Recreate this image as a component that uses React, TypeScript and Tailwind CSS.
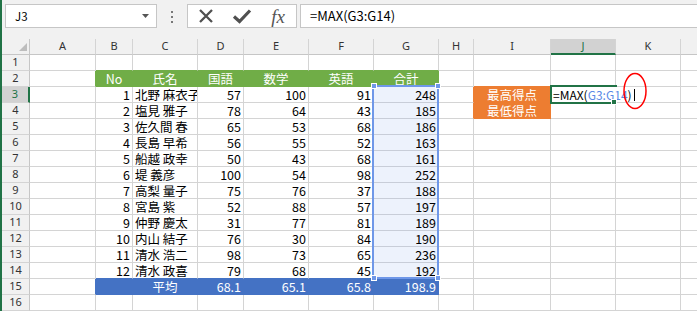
import React from 'react'

type Fill = 'green' | 'blue' | 'orange'

interface Cell {
  text?: string
  fill?: Fill
  align?: 'l' | 'c' | 'r'
  sel?: boolean
}

const FILLS: Record<Fill, { bg: string; r: string; b: string }> = {
  green: { bg: 'bg-[#70ad47]', r: 'border-r-[#70ad47]', b: 'border-b-[#70ad47]' },
  blue: { bg: 'bg-[#4472c4]', r: 'border-r-[#4472c4]', b: 'border-b-[#4472c4]' },
  orange: { bg: 'bg-[#ed7d31]', r: 'border-r-[#ed7d31]', b: 'border-b-[#ed7d31]' }
}

const COL_LETTERS = ['A', 'B', 'C', 'D', 'E', 'F', 'G', 'H', 'I', 'J', 'K', 'L']
const COL_WIDTHS = [
  'w-[66px]', 'w-[37px]', 'w-[65px]', 'w-[46px]', 'w-[65px]', 'w-[65px]',
  'w-[65px]', 'w-[35px]', 'w-[77px]', 'w-[65px]', 'w-[65px]', 'w-[65px]'
]

const scores: [number, string, number, number, number, number][] = [
  [1, '北野 麻衣子', 57, 100, 91, 248],
  [2, '塩見 雅子', 78, 64, 43, 185],
  [3, '佐久間 春', 65, 53, 68, 186],
  [4, '長島 早希', 56, 55, 52, 163],
  [5, '船越 政幸', 50, 43, 68, 161],
  [6, '堤 義彦', 100, 54, 98, 252],
  [7, '高梨 量子', 75, 76, 37, 188],
  [8, '宮島 紫', 52, 88, 57, 197],
  [9, '仲野 慶太', 31, 77, 81, 189],
  [10, '内山 結子', 76, 30, 84, 190],
  [11, '清水 浩二', 98, 73, 65, 236],
  [12, '清水 政喜', 79, 68, 45, 192]
]

function buildSheet(): Cell[][] {
  const rows: Cell[][] = Array.from({ length: 17 }, () =>
    Array.from({ length: 12 }, () => ({}))
  )

  // 見出し行
  const head = ['No', '氏名', '国語', '数学', '英語', '合計']
  head.forEach((t, i) => {
    rows[1][i + 1] = { text: t, fill: 'green', align: 'c' }
  })

  scores.forEach((s, i) => {
    const r = rows[i + 2]
    r[1] = { text: String(s[0]), align: 'r' }
    r[2] = { text: s[1], align: 'l' }
    r[3] = { text: String(s[2]), align: 'r' }
    r[4] = { text: String(s[3]), align: 'r' }
    r[5] = { text: String(s[4]), align: 'r' }
    r[6] = { text: String(s[5]), align: 'r', sel: true }
  })

  rows[2][8] = { text: '最高得点', fill: 'orange', align: 'c' }
  rows[3][8] = { text: '最低得点', fill: 'orange', align: 'c' }

  // 平均
  rows[14][1] = { fill: 'blue' }
  rows[14][2] = { text: '平均', fill: 'blue', align: 'c' }
  rows[14][3] = { text: '68.1', fill: 'blue', align: 'r' }
  rows[14][4] = { text: '65.1', fill: 'blue', align: 'r' }
  rows[14][5] = { text: '65.8', fill: 'blue', align: 'r' }
  rows[14][6] = { text: '198.9', fill: 'blue', align: 'r' }

  return rows
}

function FormulaBar() {
  return (
    <div className="flex h-[39px] items-start bg-[#f1f1f1] pt-1">
      <div className="ml-[3px] flex h-6 w-[152px] items-center border border-[#c6c6c6] bg-white">
        <span className="flex-1 pl-[9px] font-['Noto_Sans_CJK_JP',sans-serif] text-[11.5px] leading-[22px] text-black">
          J3
        </span>
        <svg width="7" height="4" viewBox="0 0 7 4" className="mr-[7px]">
          <polygon points="0,0 7,0 3.5,4" fill="#555" />
        </svg>
      </div>

      <div className="flex w-[30px] flex-col items-center gap-[3px] pt-[7px]">
        <span className="h-[2px] w-[2px] bg-[#777]" />
        <span className="h-[2px] w-[2px] bg-[#777]" />
        <span className="h-[2px] w-[2px] bg-[#777]" />
      </div>

      <div className="flex h-6 w-[110px] items-center border border-[#c6c6c6] bg-white">
        <div className="flex flex-1 justify-center">
          <svg width="16" height="16" viewBox="0 0 16 16">
            <path d="M2 2 L14 14 M14 2 L2 14" stroke="#505050" strokeWidth="2.3" />
          </svg>
        </div>
        <div className="flex flex-1 justify-center">
          <svg width="20" height="16" viewBox="0 0 20 16">
            <path d="M2 8.5 L7.5 13.5 L18 2.5" stroke="#505050" strokeWidth="3.2" fill="none" />
          </svg>
        </div>
        <div className="flex flex-1 justify-center">
          <span className="font-['Liberation_Serif',serif] text-[19px] italic leading-none text-[#555]">
            fx
          </span>
        </div>
      </div>

      <div className="ml-[3px] h-6 flex-1 border border-r-0 border-[#c6c6c6] bg-white pl-[9px] font-['Noto_Sans_CJK_JP',sans-serif] text-[13px] leading-[22px] text-black">
        =MAX(G3:G14)
      </div>
    </div>
  )
}

function ColumnHeader() {
  return (
    <div className="flex h-4 bg-[#f1f1f1] font-['Noto_Sans',sans-serif] text-[11px] text-[#333]">
      <div className="relative w-[28px] shrink-0 border-b border-r border-[#c6c6c6]">
        <svg width="8" height="8" viewBox="0 0 8 8" className="absolute bottom-[3px] right-[2px]">
          <polygon points="8,0 8,8 0,8" fill="#bdbdbd" />
        </svg>
      </div>
      {COL_LETTERS.map((l, i) => (
        <div
          key={l}
          className={`${COL_WIDTHS[i]} flex shrink-0 items-center justify-center border-r border-r-[#d4d4d4] ${
            i === 9
              ? 'border-b-2 border-b-[#217346] bg-[#d2d2d2] text-[#217346]'
              : 'border-b border-b-[#c6c6c6]'
          }`}
        >
          {l}
        </div>
      ))}
    </div>
  )
}

function SheetRow({ rows, ri }: { rows: Cell[][]; ri: number }) {
  const row = rows[ri]
  const below = rows[ri + 1]
  const active = ri === 2

  return (
    <div className="flex h-4">
      <div
        className={`flex w-[28px] shrink-0 items-center justify-center border-b border-b-[#d4d4d4] font-['Noto_Sans',sans-serif] text-[11px] ${
          active
            ? 'border-r-2 border-r-[#217346] bg-[#d2d2d2] text-[#217346]'
            : 'border-r border-r-[#c6c6c6] bg-[#f1f1f1] text-[#333]'
        }`}
      >
        {ri + 1}
      </div>
      {row.map((cell, ci) => {
        const right = row[ci + 1]
        const down = below?.[ci]
        const rb = cell.fill
          ? FILLS[cell.fill].r
          : right?.fill
            ? FILLS[right.fill].r
            : cell.sel
              ? 'border-r-[#c8cdd8]'
              : 'border-r-[#d4d4d4]'
        const bb = cell.fill
          ? FILLS[cell.fill].b
          : down?.fill
            ? FILLS[down.fill].b
            : cell.sel
              ? 'border-b-[#c8cdd8]'
              : 'border-b-[#d4d4d4]'
        const bg = cell.fill ? FILLS[cell.fill].bg : cell.sel ? 'bg-[#edf2fc]' : 'bg-white'
        const align =
          cell.align === 'r'
            ? 'text-right pr-[2px]'
            : cell.align === 'c'
              ? 'text-center'
              : 'text-left pl-[2px]'
        return (
          <div
            key={ci}
            className={`${COL_WIDTHS[ci]} shrink-0 overflow-hidden whitespace-nowrap border-b border-r ${rb} ${bb} ${bg} ${align} text-[12.5px] leading-[15px] ${
              cell.fill ? 'text-white' : 'text-black'
            }`}
          >
            {cell.text}
          </div>
        )
      })}
    </div>
  )
}

export default function App() {
  const rows = buildSheet()

  return (
    <div className="h-[311px] w-[697px] overflow-hidden border-l-2 border-[#217346] bg-white">
      <FormulaBar />

      <div className="relative font-['Noto_Sans_CJK_JP',sans-serif]">
        <ColumnHeader />
        {rows.map((_, ri) => (
          <SheetRow key={ri} rows={rows} ri={ri} />
        ))}

        {/* 参照範囲 G3:G14 */}
        <div className="pointer-events-none absolute left-[370px] top-[46px] h-[194px] w-[67px] border-2 border-[#6f97e8]" />
        <div className="absolute left-[369px] top-[44px] h-[6px] w-[6px] border border-white bg-[#6f97e8]" />
        <div className="absolute left-[433px] top-[44px] h-[6px] w-[6px] border border-white bg-[#6f97e8]" />
        <div className="absolute left-[369px] top-[236px] h-[6px] w-[6px] border border-white bg-[#6f97e8]" />
        <div className="absolute left-[433px] top-[236px] h-[6px] w-[6px] border border-white bg-[#6f97e8]" />

        {/* 編集中のセル J3 */}
        <div className="absolute left-[548px] top-[46px] h-[19px] w-[67px] border-2 border-r-0 border-[#217346]" />
        <div className="absolute left-[550px] top-[48px] flex h-[15px] w-[89px] items-center bg-white pl-[1px] text-[12px] leading-[15px] text-black">
          <span>=MAX(</span>
          <span className="text-[#5a8ae6]">G3:G14</span>
          <span>)</span>
          <span className="ml-[2px] h-[12px] w-px bg-black" />
        </div>
        <div className="absolute left-[609px] top-[60px] h-[6px] w-[6px] border border-white bg-[#217346]" />

        {/* 赤丸 */}
        <svg width="26" height="38" viewBox="0 0 26 38" className="absolute left-[620px] top-[33px]">
          <ellipse cx="13" cy="19" rx="11" ry="17.5" fill="none" stroke="#ff0000" strokeWidth="1.5" />
        </svg>
      </div>
    </div>
  )
}
